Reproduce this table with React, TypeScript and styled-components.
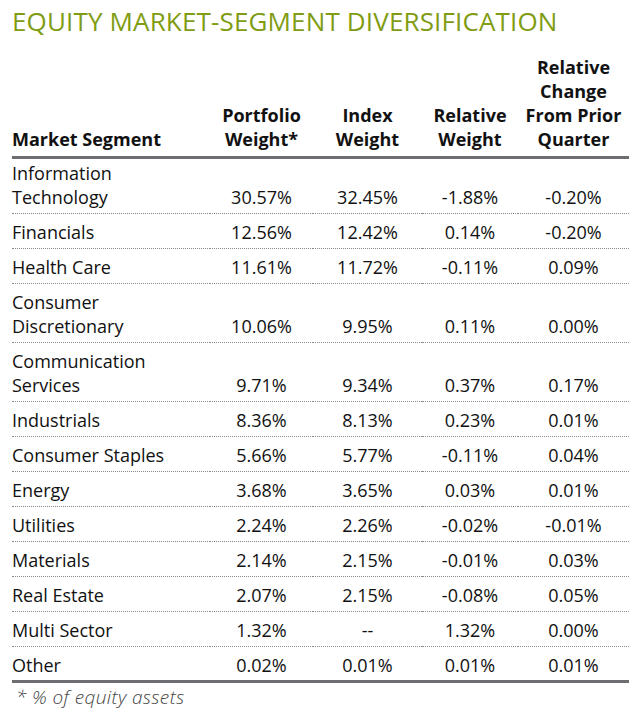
import styled, { createGlobalStyle } from "styled-components";

const GlobalStyle = createGlobalStyle`
  body {
    margin: 0;
    background: #fff;
    font-family: "Open Sans", "Noto Sans", sans-serif;
    color: #111;
  }
`;

type Row = {
  segment: string[];
  portfolio: string;
  index: string;
  relative: string;
  change: string;
};

const rows: Row[] = [
  { segment: ["Information", "Technology"], portfolio: "30.57%", index: "32.45%", relative: "-1.88%", change: "-0.20%" },
  { segment: ["Financials"], portfolio: "12.56%", index: "12.42%", relative: "0.14%", change: "-0.20%" },
  { segment: ["Health Care"], portfolio: "11.61%", index: "11.72%", relative: "-0.11%", change: "0.09%" },
  { segment: ["Consumer", "Discretionary"], portfolio: "10.06%", index: "9.95%", relative: "0.11%", change: "0.00%" },
  { segment: ["Communication", "Services"], portfolio: "9.71%", index: "9.34%", relative: "0.37%", change: "0.17%" },
  { segment: ["Industrials"], portfolio: "8.36%", index: "8.13%", relative: "0.23%", change: "0.01%" },
  { segment: ["Consumer Staples"], portfolio: "5.66%", index: "5.77%", relative: "-0.11%", change: "0.04%" },
  { segment: ["Energy"], portfolio: "3.68%", index: "3.65%", relative: "0.03%", change: "0.01%" },
  { segment: ["Utilities"], portfolio: "2.24%", index: "2.26%", relative: "-0.02%", change: "-0.01%" },
  { segment: ["Materials"], portfolio: "2.14%", index: "2.15%", relative: "-0.01%", change: "0.03%" },
  { segment: ["Real Estate"], portfolio: "2.07%", index: "2.15%", relative: "-0.08%", change: "0.05%" },
  { segment: ["Multi Sector"], portfolio: "1.32%", index: "--", relative: "1.32%", change: "0.00%" },
  { segment: ["Other"], portfolio: "0.02%", index: "0.01%", relative: "0.01%", change: "0.01%" },
];

export default function App() {
  return (
    <Page>
      <GlobalStyle />
      <Title>EQUITY MARKET-SEGMENT DIVERSIFICATION</Title>
      <Table>
        <colgroup>
          <col style={{ width: 198 }} />
          <col style={{ width: 103 }} />
          <col style={{ width: 109 }} />
          <col style={{ width: 96 }} />
          <col style={{ width: 111 }} />
        </colgroup>
        <thead>
          <tr>
            <Head align="left">Market Segment</Head>
            <Head>Portfolio<br />Weight*</Head>
            <Head>Index<br />Weight</Head>
            <Head>Relative<br />Weight</Head>
            <Head>Relative<br />Change<br />From Prior<br />Quarter</Head>
          </tr>
        </thead>
        <tbody>
          {rows.map((r) => (
            <BodyRow key={r.segment.join(" ")}>
              <Cell align="left">
                {r.segment.map((s, i) => (
                  <span key={s}>
                    {i > 0 && <br />}
                    {s}
                  </span>
                ))}
              </Cell>
              <Cell>{r.portfolio}</Cell>
              <Cell>{r.index}</Cell>
              <Cell>{r.relative}</Cell>
              <Cell>{r.change}</Cell>
            </BodyRow>
          ))}
        </tbody>
      </Table>
      <Footnote>* % of equity assets</Footnote>
    </Page>
  );
}

const Page = styled.div`
  padding: 0 11px 0 12px;
  width: 640px;
  box-sizing: border-box;
`;

const Title = styled.h1`
  margin: 0;
  padding-top: 6px;
  font-size: 26px;
  line-height: 30px;
  font-weight: 400;
  color: #7f9c12;
  letter-spacing: 0.15px;
  white-space: nowrap;
`;

const Table = styled.table`
  width: 617px;
  table-layout: fixed;
  border-collapse: collapse;
  margin-top: 19px;
  font-size: 18px;
  line-height: 24px;
`;

const Head = styled.th<{ align?: "left" | "center" }>`
  text-align: ${({ align }) => align ?? "center"};
  vertical-align: bottom;
  font-weight: 700;
  padding: 0 0 5px;
  white-space: nowrap;
  border-bottom: 3px solid #6d6e71;
`;

const BodyRow = styled.tr`
  border-bottom: 1px dotted #8a8a8a;

  &:first-child td {
    padding-top: 2px;
  }

  &:last-child {
    border-bottom: 3px solid #6d6e71;
  }

  &:last-child td {
    padding-bottom: 3px;
  }
`;

const Cell = styled.td<{ align?: "left" | "center" }>`
  text-align: ${({ align }) => align ?? "center"};
  vertical-align: bottom;
  padding: 6px 0 4px;
  font-weight: 400;
  white-space: nowrap;
`;

const Footnote = styled.p`
  margin: 0;
  padding: 2px 0 0 4px;
  font-size: 19px;
  line-height: 24px;
  font-style: italic;
  font-weight: 300;
  letter-spacing: 0.4px;
  color: #444;
`;
